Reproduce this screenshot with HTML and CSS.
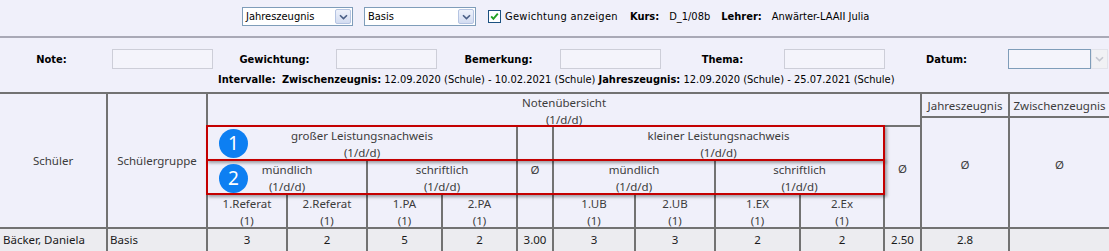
FILE: index.html
```html
<!DOCTYPE html>
<html lang="de">
<head>
  <meta charset="UTF-8" />
  <title>Notenübersicht</title>
  <link rel="stylesheet" href="styles.css">
</head>
<body>
  <div class="topbar">
    <div class="combo combo-zeugnis">
      <span class="combo-text">Jahreszeugnis</span>
      <span class="combo-btn"><svg width="9" height="6" viewBox="0 0 9 6"><path d="M1 1.2 L4.5 4.6 L8 1.2" fill="none" stroke="#4a5f86" stroke-width="1.6"/></svg></span>
    </div>
    <div class="combo combo-basis">
      <span class="combo-text">Basis</span>
      <span class="combo-btn"><svg width="9" height="6" viewBox="0 0 9 6"><path d="M1 1.2 L4.5 4.6 L8 1.2" fill="none" stroke="#4a5f86" stroke-width="1.6"/></svg></span>
    </div>
    <label class="check">
      <span class="check-box"><svg width="11" height="11" viewBox="0 0 11 11"><path d="M2.2 5.4 L4.4 7.8 L8.8 2.6" fill="none" stroke="#21a121" stroke-width="1.9"/></svg></span>
      <span class="check-text">Gewichtung anzeigen</span>
    </label>
    <span class="info"><b>Kurs:</b><span>D_1/08b</span></span>
    <span class="info"><b>Lehrer:</b><span>Anwärter-LAAII Julia</span></span>
  </div>

  <div class="filter">
    <div class="filter-row">
      <span class="lbl lbl-first">Note:</span><span class="field"></span>
      <span class="lbl">Gewichtung:</span><span class="field"></span>
      <span class="lbl">Bemerkung:</span><span class="field"></span>
      <span class="lbl">Thema:</span><span class="field"></span>
      <span class="lbl">Datum:</span>
      <span class="date">
        <span class="date-text"></span>
        <span class="date-btn"><svg width="9" height="6" viewBox="0 0 9 6"><path d="M1 1.2 L4.5 4.6 L8 1.2" fill="none" stroke="#c4c7d0" stroke-width="1.6"/></svg></span>
      </span>
    </div>
    <div class="interval">
      <b>Intervalle:</b>&nbsp; <b>Zwischenzeugnis:</b> 12.09.2020 (Schule) - 10.02.2021 (Schule) <b>Jahreszeugnis:</b> 12.09.2020 (Schule) - 25.07.2021 (Schule)
    </div>
  </div>

  <div class="grid">
    <div class="cell mid rows5">Schüler</div>
    <div class="cell mid rows5">Schülergruppe</div>
    <div class="cell cols10 rows2">Notenübersicht<br>(1/d/d)</div>
    <div class="cell mid">Jahreszeugnis</div>
    <div class="cell mid">Zwischenzeugnis</div>

    <div class="cell mid avg rows4">Ø</div>
    <div class="cell mid avg rows4">Ø</div>

    <div class="cell cols4">großer Leistungsnachweis<br>(1/d/d)</div>
    <div class="cell"></div>
    <div class="cell cols4">kleiner Leistungsnachweis<br>(1/d/d)</div>
    <div class="cell mid avg rows3">Ø</div>

    <div class="cell cols2">mündlich<br>(1/d/d)</div>
    <div class="cell cols2">schriftlich<br>(1/d/d)</div>
    <div class="cell">Ø</div>
    <div class="cell cols2">mündlich<br>(1/d/d)</div>
    <div class="cell cols2">schriftlich<br>(1/d/d)</div>

    <div class="cell">1.Referat<br>(1)</div>
    <div class="cell">2.Referat<br>(1)</div>
    <div class="cell">1.PA<br>(1)</div>
    <div class="cell">2.PA<br>(1)</div>
    <div class="cell"></div>
    <div class="cell">1.UB<br>(1)</div>
    <div class="cell">2.UB<br>(1)</div>
    <div class="cell">1.EX<br>(1)</div>
    <div class="cell">2.Ex<br>(1)</div>

    <div class="cell data left">Bäcker, Daniela</div>
    <div class="cell data left">Basis</div>
    <div class="cell data">3</div>
    <div class="cell data">2</div>
    <div class="cell data">5</div>
    <div class="cell data">2</div>
    <div class="cell data">3.00</div>
    <div class="cell data">3</div>
    <div class="cell data">3</div>
    <div class="cell data">2</div>
    <div class="cell data">2</div>
    <div class="cell data">2.50</div>
    <div class="cell data">2.8</div>
    <div class="cell data"></div>

    <div class="mark mark-one"></div>
    <div class="mark mark-two"></div>
    <div class="badge badge-one">1</div>
    <div class="badge badge-two">2</div>
  </div>
</body>
</html>
```

FILE: styles.css
```css
body {
  margin: 0;
  width: 1109px;
  height: 251px;
  overflow: hidden;
  background: #f0f0fa;
  font-family: "DejaVu Sans Condensed", "DejaVu Sans", "Liberation Sans", sans-serif;
  font-size: 11px;
  color: #000;
}

/* top bar */
.topbar {
  display: flex;
  align-items: center;
  padding: 7px 0 10px 242px;
  height: 19px;
}
.combo {
  display: flex;
  height: 19px;
  box-sizing: border-box;
  border: 1px solid #7f9db9;
  background: #fff;
}
.combo-zeugnis {
  width: 111px;
  margin-right: 11px;
}
.combo-basis {
  width: 112px;
  margin-right: 12px;
}
.combo-text {
  flex: 1;
  padding-left: 3px;
  line-height: 17px;
}
.combo-btn {
  width: 14px;
  margin: 1px;
  border: 1px solid #b5c4e2;
  border-radius: 2px;
  background: linear-gradient(#eef2fb, #d3dcf1);
  display: flex;
  justify-content: center;
  align-items: center;
}
.check {
  display: flex;
  align-items: center;
  gap: 4px;
  margin-right: 12px;
}
.check-text {
  letter-spacing: 0.3px;
}
.check-box {
  width: 13px;
  height: 13px;
  box-sizing: border-box;
  border: 1px solid #1c5180;
  background: #fff;
  display: flex;
  justify-content: center;
  align-items: center;
}
.info {
  display: flex;
  gap: 10px;
  margin-right: 11px;
}

/* filter */
.filter {
  border-top: 2px solid #a9a9b6;
  padding: 11px 0 5px 0;
}
.filter-row {
  display: grid;
  grid-template-columns: 112px 101px 123px 101px 123px 101px 123px 101px 123px 100px;
  height: 20px;
  align-items: center;
}
.lbl {
  font-weight: bold;
  text-align: center;
}
.lbl-first {
  padding-right: 9px;
}
.field {
  height: 20px;
  box-sizing: border-box;
  border: 1px solid #cdced8;
  background: #f4f4fb;
}
.date {
  display: flex;
  height: 20px;
}
.date-text {
  flex: 1;
  border: 1px solid #7f9db9;
  background: #f4f4fb;
}
.date-btn {
  width: 15px;
  border: 1px solid #e2e3ea;
  background: #f1f1f4;
  display: flex;
  justify-content: center;
  align-items: center;
}
.interval {
  margin-top: 3px;
  padding-left: 218px;
  line-height: 15px;
}

/* table */
.grid {
  position: relative;
  display: grid;
  grid-template-columns: 106px 98px 78px 78px 73px 73px 34px 80px 78px 83px 82px 35px 86px 99px;
  grid-template-rows: 22px 7px 32px 32px 32px 22px;
  gap: 2px;
  padding-top: 2px;
  background: #727272;
  font-family: "Noto Sans", "Open Sans", sans-serif;
  font-size: 11.5px;
  color: #3c3c3c;
}
.cell {
  background: #f0f0fa;
  text-align: center;
  line-height: 17px;
  white-space: nowrap;
}
.mid {
  display: flex;
  justify-content: center;
  align-items: center;
}
.avg {
  padding-bottom: 17px;
}
.cols2 { grid-column: span 2; }
.cols4 { grid-column: span 4; }
.cols10 { grid-column: span 10; }
.rows2 { grid-row: span 2; }
.rows3 { grid-row: span 3; }
.rows4 { grid-row: span 4; }
.rows5 { grid-row: span 5; }
.data {
  background: #ececf0;
  color: #1a1a1a;
  line-height: 22px;
}
.left {
  text-align: left;
  padding-left: 3px;
}
.data.left + .data.left {
  padding-left: 2px;
}

/* highlight boxes */
.mark {
  position: absolute;
  left: 206px;
  width: 679px;
  height: 36px;
  box-sizing: border-box;
  border: 2px solid #c40000;
  box-shadow: 2px 2px 3px rgba(0, 0, 0, 0.35);
}
.mark-one { top: 33px; }
.mark-two { top: 67px; }
.badge {
  position: absolute;
  left: 219px;
  width: 29px;
  height: 29px;
  border-radius: 50%;
  background: #0d7ff2;
  color: #fff;
  font-family: "Noto Sans", sans-serif;
  font-size: 19px;
  line-height: 29px;
  text-align: center;
}
.badge-one { top: 37px; }
.badge-two { top: 72px; }
```
